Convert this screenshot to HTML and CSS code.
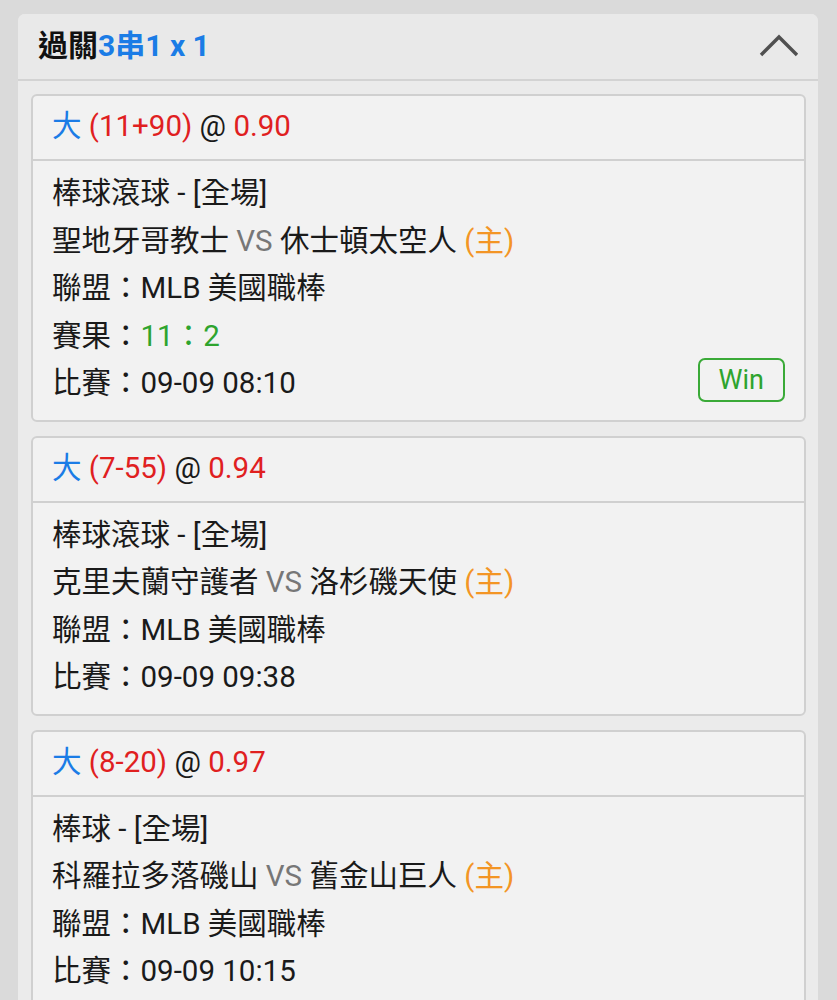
FILE: index.html
```html
<!DOCTYPE html>
<html lang="zh-Hant">
<head>
<meta charset="utf-8">
<link rel="stylesheet" href="styles.css">
</head>
<body>
<div class="panel">
  <div class="panel-head">
    <div class="title">過關<span class="blue">3串1 x 1</span></div>
    <svg class="chev" width="44" height="26" viewBox="0 0 44 26"><polyline points="4,22 22,4 40,22" fill="none" stroke="#505050" stroke-width="3.4"/></svg>
  </div>
  <div class="list">
    <div class="card">
      <div class="card-head"><span class="blue">大</span> <span class="red">(11+90)</span> @ <span class="red">0.90</span></div>
      <div class="card-body">
        <div class="row">棒球滾球 - [全場]</div>
        <div class="row">聖地牙哥教士 <span class="gray">VS</span> 休士頓太空人 <span class="orange">(主)</span></div>
        <div class="row">聯盟：MLB 美國職棒</div>
        <div class="row">賽果：<span class="green">11：2</span></div>
        <div class="row split"><span>比賽：09-09 08:10</span><span class="win">Win</span></div>
      </div>
    </div>
    <div class="card">
      <div class="card-head"><span class="blue">大</span> <span class="red">(7-55)</span> @ <span class="red">0.94</span></div>
      <div class="card-body">
        <div class="row">棒球滾球 - [全場]</div>
        <div class="row">克里夫蘭守護者 <span class="gray">VS</span> 洛杉磯天使 <span class="orange">(主)</span></div>
        <div class="row">聯盟：MLB 美國職棒</div>
        <div class="row">比賽：09-09 09:38</div>
      </div>
    </div>
    <div class="card">
      <div class="card-head"><span class="blue">大</span> <span class="red">(8-20)</span> @ <span class="red">0.97</span></div>
      <div class="card-body">
        <div class="row">棒球 - [全場]</div>
        <div class="row">科羅拉多落磯山 <span class="gray">VS</span> 舊金山巨人 <span class="orange">(主)</span></div>
        <div class="row">聯盟：MLB 美國職棒</div>
        <div class="row">比賽：09-09 10:15</div>
      </div>
    </div>
  </div>
</div>
</body>
</html>
```
FILE: styles.css
```css
html, body {
  margin: 0;
  padding: 0;
  background: #dadada;
  font-family: Roboto, "Noto Sans CJK TC", sans-serif;
  color: #1a1a1a;
}
.panel {
  width: 800px;
  margin: 14px 0 0 18px;
  background: #ebebeb;
  border-radius: 7px 7px 0 0;
  min-height: 1000px;
}
.panel-head {
  height: 65px;
  border-bottom: 2px solid #d3d3d3;
  background: #e9e9e9;
  border-radius: 7px 7px 0 0;
  display: flex;
  align-items: center;
  justify-content: space-between;
  padding: 0 17px 0 20px;
}
.title {
  font-size: 30px;
  font-weight: bold;
  color: #111;
  margin-top: -7px;
}
.chev {
  display: block;
  margin-top: -1px;
}
.list {
  display: flex;
  flex-direction: column;
  gap: 14px;
  padding: 13px 12px 0 13px;
}
.card {
  background: #f2f2f2;
  border: 2px solid #d0d0d0;
  border-radius: 6px;
}
.card-head {
  height: 63px;
  line-height: 60px;
  border-bottom: 2px solid #d0d0d0;
  padding: 0 19px;
  font-size: 29.5px;
  white-space: nowrap;
}
.card-body {
  padding: 9px 19px 12px;
  font-size: 29.5px;
}
.row {
  line-height: 47.5px;
  height: 47.5px;
}
.split {
  display: flex;
  justify-content: space-between;
  align-items: center;
}
.win {
  border: 2px solid #3aaa38;
  border-radius: 7px;
  color: #2ea42e;
  font-size: 27px;
  line-height: 40px;
  height: 40px;
  padding: 0 19px;
  margin-top: -8px;
}
.blue { color: #1b7ce6; }
.red { color: #e0201f; }
.orange { color: #f39525; }
.green { color: #2ea42e; }
.gray { color: #777; }
```
